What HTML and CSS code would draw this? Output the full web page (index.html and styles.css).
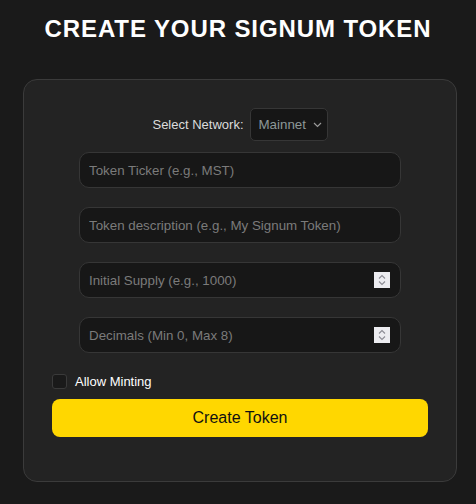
FILE: index.html
```html
<!DOCTYPE html>
<html lang="en">
<head>
<meta charset="utf-8">
<title>Create Your Signum Token</title>
<link rel="stylesheet" href="styles.css">
</head>
<body>
<h1 class="title">CREATE YOUR SIGNUM TOKEN</h1>
<form class="card">
  <div class="network-row">
    <label class="network-label" for="network">Select Network:</label>
    <span class="select-wrap">
      <select id="network" class="select">
        <option>Mainnet</option>
        <option>Testnet</option>
      </select>
      <svg class="chevron" width="9" height="6" viewBox="0 0 9 6"><path d="M1 1l3.5 3.5L8 1" fill="none" stroke="#9a9a9a" stroke-width="1.2"/></svg>
    </span>
  </div>
  <input class="field field-first" type="text" placeholder="Token Ticker (e.g., MST)">
  <input class="field" type="text" placeholder="Token description (e.g., My Signum Token)">
  <span class="num-wrap">
    <input class="field field-num" type="number" placeholder="Initial Supply (e.g., 1000)">
    <span class="spin"><svg width="16" height="16" viewBox="0 0 16 16"><path d="M5 6.5l3-3 3 3M5 9.5l3 3 3-3" fill="none" stroke="#8c8c94" stroke-width="1.1"/></svg></span>
  </span>
  <span class="num-wrap">
    <input class="field field-num" type="number" placeholder="Decimals (Min 0, Max 8)">
    <span class="spin"><svg width="16" height="16" viewBox="0 0 16 16"><path d="M5 6.5l3-3 3 3M5 9.5l3 3 3-3" fill="none" stroke="#8c8c94" stroke-width="1.1"/></svg></span>
  </span>
  <label class="check-row">
    <input class="check" type="checkbox">
    <span>Allow Minting</span>
  </label>
  <button class="btn" type="button">Create Token</button>
</form>
</body>
</html>
```
FILE: styles.css
```css
* { box-sizing: border-box; }

body {
  margin: 0;
  background: #1a1a1a;
  font-family: "Liberation Sans", Arial, sans-serif;
  color: #e6e6e6;
}

.title {
  margin: 15px 0 36px;
  font-size: 24px;
  line-height: 28px;
  font-weight: 700;
  letter-spacing: 0.9px;
  text-align: center;
  color: #ffffff;
}

.card {
  margin-left: 23px;
  width: 434px;
  background: #232323;
  border: 1px solid #3b3b3b;
  border-radius: 14px;
  padding: 28px 28px 44px;
  display: flex;
  flex-direction: column;
}

.network-row {
  display: flex;
  justify-content: center;
  align-items: center;
  gap: 6px;
}

.network-label {
  font-size: 13px;
  color: #dcdcdc;
}

.select-wrap {
  position: relative;
  display: inline-block;
}

.select {
  appearance: none;
  -webkit-appearance: none;
  width: 78px;
  height: 33px;
  padding: 0 20px 0 8px;
  background: #161616;
  border: 1px solid #363636;
  border-radius: 5px;
  color: #8d9898;
  font-family: "Liberation Sans", Arial, sans-serif;
  font-size: 13.33px;
}

.chevron {
  position: absolute;
  right: 6px;
  top: 14px;
  pointer-events: none;
}

.field {
  display: block;
  width: 322px;
  height: 36px;
  margin: 19px auto 0;
  padding: 0 9px;
  background: #171717;
  border: 1px solid #363636;
  border-radius: 10px;
  color: #dddddd;
  font-family: "Liberation Sans", Arial, sans-serif;
  font-size: 13.33px;
  outline: none;
}

.field-first { margin-top: 11px; }

.field::placeholder { color: #7b7b7b; }

.num-wrap {
  position: relative;
  display: block;
  width: 322px;
  margin: 0 auto;
}

.field-num { -moz-appearance: textfield; }
.field-num::-webkit-inner-spin-button,
.field-num::-webkit-outer-spin-button {
  -webkit-appearance: none;
  margin: 0;
}

.spin {
  position: absolute;
  right: 11px;
  bottom: 10px;
  width: 16px;
  height: 16px;
  background: #ececf0;
  display: flex;
}

.check-row {
  display: flex;
  align-items: center;
  gap: 8px;
  margin-top: 21px;
  height: 15px;
  font-size: 13px;
  color: #ffffff;
}

.check {
  appearance: none;
  -webkit-appearance: none;
  margin: 0;
  width: 15px;
  height: 15px;
  background: #1a1a1a;
  border: 1px solid #3a3a3a;
  border-radius: 3px;
}

.btn {
  margin-top: 10px;
  height: 38px;
  width: 100%;
  border: none;
  border-radius: 8px;
  background: #ffd700;
  color: #111111;
  font-family: "Liberation Sans", Arial, sans-serif;
  font-size: 16px;
}
```
